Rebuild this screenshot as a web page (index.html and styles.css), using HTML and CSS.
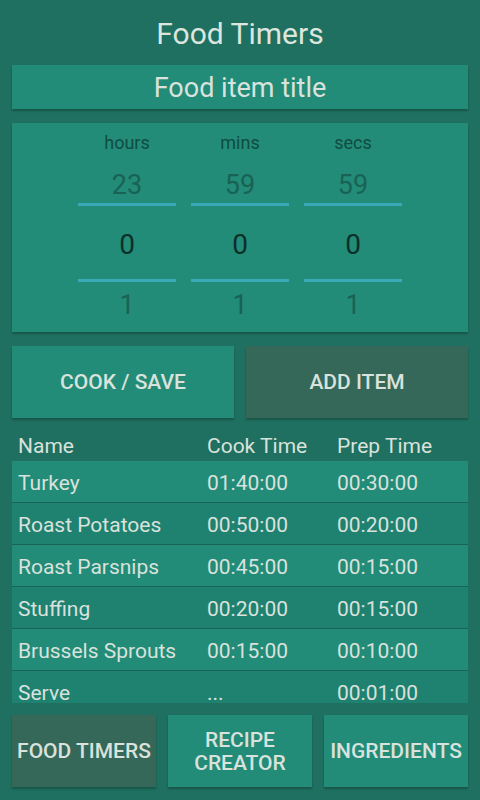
FILE: index.html
```html
<!DOCTYPE html>
<html lang="en">
<head>
  <meta charset="UTF-8">
  <meta name="viewport" content="width=device-width, initial-scale=1.0">
  <title>Food Timers</title>
  <link rel="stylesheet" href="styles.css">
</head>
<body>
  <!-- Header -->
  <div class="app-title">Food Timers</div>

  <div class="item-title">Food item title</div>

  <!-- Time picker -->
  <div class="picker-panel">
    <div class="picker-col">
      <div class="picker-label">hours</div>
      <div class="picker-prev">23</div>
      <div class="picker-line"></div>
      <div class="picker-current">0</div>
      <div class="picker-line"></div>
      <div class="picker-next">1</div>
    </div>
    <div class="picker-col">
      <div class="picker-label">mins</div>
      <div class="picker-prev">59</div>
      <div class="picker-line"></div>
      <div class="picker-current">0</div>
      <div class="picker-line"></div>
      <div class="picker-next">1</div>
    </div>
    <div class="picker-col">
      <div class="picker-label">secs</div>
      <div class="picker-prev">59</div>
      <div class="picker-line"></div>
      <div class="picker-current">0</div>
      <div class="picker-line"></div>
      <div class="picker-next">1</div>
    </div>
  </div>

  <!-- Actions -->
  <div class="action-row">
    <button class="btn">COOK / SAVE</button>
    <button class="btn btn-dark">ADD ITEM</button>
  </div>

  <!-- Timer list -->
  <div class="list-head">
    <span class="col-name">Name</span>
    <span class="col-cook">Cook Time</span>
    <span class="col-prep">Prep Time</span>
  </div>
  <div class="timer-list">
    <div class="timer-row">
      <span class="col-name">Turkey</span>
      <span class="col-cook">01:40:00</span>
      <span class="col-prep">00:30:00</span>
    </div>
    <div class="timer-row">
      <span class="col-name">Roast Potatoes</span>
      <span class="col-cook">00:50:00</span>
      <span class="col-prep">00:20:00</span>
    </div>
    <div class="timer-row">
      <span class="col-name">Roast Parsnips</span>
      <span class="col-cook">00:45:00</span>
      <span class="col-prep">00:15:00</span>
    </div>
    <div class="timer-row">
      <span class="col-name">Stuffing</span>
      <span class="col-cook">00:20:00</span>
      <span class="col-prep">00:15:00</span>
    </div>
    <div class="timer-row">
      <span class="col-name">Brussels Sprouts</span>
      <span class="col-cook">00:15:00</span>
      <span class="col-prep">00:10:00</span>
    </div>
    <div class="timer-row">
      <span class="col-name">Serve</span>
      <span class="col-cook">...</span>
      <span class="col-prep">00:01:00</span>
    </div>
  </div>

  <!-- Bottom navigation -->
  <div class="nav-row">
    <button class="btn nav-btn btn-dark">FOOD TIMERS</button>
    <button class="btn nav-btn">RECIPE<br>CREATOR</button>
    <button class="btn nav-btn">INGREDIENTS</button>
  </div>
</body>
</html>
```

FILE: styles.css
```css
body, html {
  margin: 0;
  padding: 0;
  width: 100%;
  height: 100%;
  background-color: #1f7060;
  font-family: Roboto, "Noto Sans", sans-serif;
  color: #d9e2dc;
}

body {
  display: flex;
  flex-direction: column;
  padding: 0 12px;
  box-sizing: border-box;
}

/* Header */
.app-title {
  height: 65px;
  line-height: 68px;
  text-align: center;
  font-size: 30px;
  color: #dce5de;
}

.item-title {
  height: 44px;
  line-height: 47px;
  text-align: center;
  font-size: 27px;
  background-color: #228c78;
  box-shadow: 0 2px 2px rgba(0, 0, 0, 0.25);
}

/* Picker panel */
.picker-panel {
  margin-top: 14px;
  height: 209px;
  display: flex;
  justify-content: center;
  gap: 15px;
  background-color: #228c78;
  box-shadow: 0 2px 2px rgba(0, 0, 0, 0.25);
}

.picker-col {
  width: 98px;
  display: flex;
  flex-direction: column;
  text-align: center;
}

.picker-label {
  height: 40px;
  line-height: 40px;
  font-size: 18px;
  color: #0f4c41;
}

.picker-prev {
  height: 40px;
  line-height: 45px;
  font-size: 27px;
  color: #1a6254;
}

.picker-line {
  height: 3px;
  background-color: #3aa9b7;
}

.picker-current {
  height: 73px;
  line-height: 77px;
  font-size: 28px;
  color: #0c2f29;
}

.picker-next {
  height: 44px;
  line-height: 46px;
  font-size: 27px;
  color: #1a6254;
}

/* Buttons */
.btn {
  border: none;
  margin: 0;
  padding: 0;
  font-family: Roboto, "Noto Sans", sans-serif;
  font-weight: 500;
  font-size: 21px;
  color: #d9e2dc;
  background-color: #228c78;
  box-shadow: 0 2px 2px rgba(0, 0, 0, 0.25);
}

.btn-dark {
  background-color: #356858;
}

.action-row {
  margin-top: 14px;
  display: flex;
  gap: 12px;
}

.action-row .btn {
  flex: 1;
  height: 72px;
}

/* Timer list */
.list-head,
.timer-row {
  display: flex;
  font-size: 21px;
}

.list-head {
  height: 43px;
  line-height: 57px;
}

.col-name {
  width: 189px;
  padding-left: 6px;
}

.col-cook {
  width: 130px;
}

.timer-list {
  height: 242px;
  overflow: hidden;
  background-color: #1b6858;
}

.timer-row {
  height: 41px;
  line-height: 45px;
  border-bottom: 1px solid #1a6456;
  background-color: #228c78;
}

.timer-row:nth-child(even) {
  background-color: #1f8170;
}

/* Bottom navigation */
.nav-row {
  margin-top: 12px;
  display: flex;
  gap: 12px;
}

.nav-btn {
  flex: 1;
  height: 72px;
  line-height: 23px;
  padding-top: 1px;
}
```
